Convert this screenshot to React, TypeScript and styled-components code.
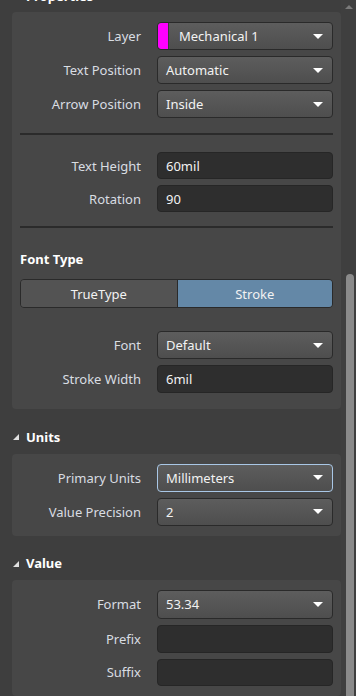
import React from "react";
import styled, { createGlobalStyle, css } from "styled-components";

const Global = createGlobalStyle`
  html, body {
    margin: 0;
    padding: 0;
    background: #3e3e3e;
    overflow: hidden;
  }
  body {
    font-family: "Noto Sans", "Open Sans", "DejaVu Sans", sans-serif;
    font-size: 13px;
    color: #e6e6e6;
  }
`;

const Frame = styled.div`
  width: 356px;
  height: 696px;
  display: flex;
  overflow: hidden;
`;

const Content = styled.div`
  width: 341px;
  margin-top: -16px;
  display: flex;
  flex-direction: column;
`;

const Scrollbar = styled.div`
  position: relative;
  width: 15px;
  display: flex;
  flex-direction: column;
  align-items: center;
  background: #3f3f3f;
`;

const UpArrow = styled.div`
  margin-top: 5px;
  width: 0;
  height: 0;
  border-left: 4px solid transparent;
  border-right: 4px solid transparent;
  border-bottom: 4px solid #7a7a7a;
`;

const Thumb = styled.div`
  position: absolute;
  left: 5px;
  top: 274px;
  width: 8px;
  bottom: -20px;
  border-radius: 4px;
  background: #8a8a8a;
`;

const SectionHeader = styled.div<{ $gap?: number }>`
  height: 26px;
  display: flex;
  align-items: center;
  gap: 7px;
  padding-left: 13px;
  margin-top: ${(p) => p.$gap ?? 0}px;
  font-weight: 700;
  font-size: 13px;
  color: #ffffff;
`;

const Caret = styled.span`
  width: 0;
  height: 0;
  border-left: 6px solid transparent;
  border-bottom: 6px solid #e0e0e0;
  margin-top: 1px;
`;

const Panel = styled.div<{ $pt?: number; $pb?: number }>`
  margin: 5px 0 0 12px;
  background: #474747;
  border-radius: 4px;
  padding: ${(p) => p.$pt ?? 10}px 8px ${(p) => p.$pb ?? 10}px 8px;
  display: flex;
  flex-direction: column;
`;

const Grid = styled.div`
  display: grid;
  grid-template-columns: 121px 1fr;
  column-gap: 16px;
  row-gap: 6px;
  align-items: center;
`;

const Label = styled.div`
  text-align: right;
  color: #d9dde2;
  white-space: nowrap;
`;

const controlBase = css`
  box-sizing: border-box;
  border-radius: 4px;
  display: flex;
  align-items: center;
  color: #f2f2f2;
  white-space: nowrap;
  overflow: hidden;
`;

const Select = styled.div<{ $focused?: boolean; $h?: number }>`
  ${controlBase};
  height: ${(p) => p.$h ?? 28}px;
  padding: 0 8px 0 8px;
  background: linear-gradient(#5d5d5d, #4e4e4e);
  border: 1px solid ${(p) => (p.$focused ? "#a9c7e6" : "#2a2a2a")};
`;

const SelectText = styled.span`
  flex: 1;
`;

const Arrow = styled.span`
  width: 0;
  height: 0;
  border-left: 5px solid transparent;
  border-right: 5px solid transparent;
  border-top: 5px solid #ffffff;
  margin-right: 1px;
`;

const Swatch = styled.span`
  align-self: stretch;
  width: 10px;
  margin: 0 10px 0 -8px;
  background: #ff00ff;
  border-right: 1px solid #3a3a3a;
  border-radius: 3px 0 0 3px;
`;

const Input = styled.div<{ $h?: number }>`
  ${controlBase};
  height: ${(p) => p.$h ?? 27}px;
  padding: 0 8px;
  background: #2e2e2e;
  border: 1px solid #262626;
`;

const Divider = styled.div<{ $mt?: number; $mb?: number }>`
  height: 2px;
  background: #2b2b2b;
  margin: ${(p) => p.$mt ?? 15}px 0 ${(p) => p.$mb ?? 17}px 0;
`;

const SubTitle = styled.div`
  margin-top: 22px;
  font-weight: 700;
  color: #ffffff;
  line-height: 18px;
`;

const Segmented = styled.div`
  margin-top: 11px;
  height: 29px;
  box-sizing: border-box;
  display: grid;
  grid-template-columns: 1fr 1fr;
  border: 1px solid #2a2a2a;
  border-radius: 4px;
  overflow: hidden;
`;

const Segment = styled.div<{ $active?: boolean }>`
  display: flex;
  align-items: center;
  justify-content: center;
  background: ${(p) => (p.$active ? "#6488a7" : "#535353")};
  color: #f2f2f2;
  border-left: ${(p) => (p.$active ? "1px solid #2a2a2a" : "none")};
`;

const Spacer = styled.div<{ $h: number }>`
  height: ${(p) => p.$h}px;
`;

function Dropdown({ value, swatch, focused, h }: { value: string; swatch?: boolean; focused?: boolean; h?: number }) {
  return (
    <Select $focused={focused} $h={h}>
      {swatch && <Swatch />}
      <SelectText>{value}</SelectText>
      <Arrow />
    </Select>
  );
}

export default function App() {
  return (
    <Frame>
      <Global />
      <Content>
        <SectionHeader>
          <Caret />
          Properties
        </SectionHeader>
        <Panel $pb={16}>
          <Grid>
            <Label>Layer</Label>
            <Dropdown value="Mechanical 1" swatch />
            <Label>Text Position</Label>
            <Dropdown value="Automatic" />
            <Label>Arrow Position</Label>
            <Dropdown value="Inside" />
          </Grid>
          <Divider />
          <Grid>
            <Label>Text Height</Label>
            <Input>60mil</Input>
            <Label>Rotation</Label>
            <Input>90</Input>
          </Grid>
          <Divider $mt={14} $mb={0} />
          <SubTitle>Font Type</SubTitle>
          <Segmented>
            <Segment>TrueType</Segment>
            <Segment $active>Stroke</Segment>
          </Segmented>
          <Spacer $h={23} />
          <Grid>
            <Label>Font</Label>
            <Dropdown value="Default" />
            <Label>Stroke Width</Label>
            <Input $h={28}>6mil</Input>
          </Grid>
        </Panel>

        <SectionHeader $gap={16}>
          <Caret />
          Units
        </SectionHeader>
        <Panel>
          <Grid>
            <Label>Primary Units</Label>
            <Dropdown value="Millimeters" focused />
            <Label>Value Precision</Label>
            <Dropdown value="2" />
          </Grid>
        </Panel>

        <SectionHeader $gap={16}>
          <Caret />
          Value
        </SectionHeader>
        <Panel>
          <Grid>
            <Label>Format</Label>
            <Dropdown value="53.34" h={29} />
            <Label>Prefix</Label>
            <Input $h={28} />
            <Label>Suffix</Label>
            <Input />
          </Grid>
        </Panel>
      </Content>
      <Scrollbar>
        <UpArrow />
        <Thumb />
      </Scrollbar>
    </Frame>
  );
}
